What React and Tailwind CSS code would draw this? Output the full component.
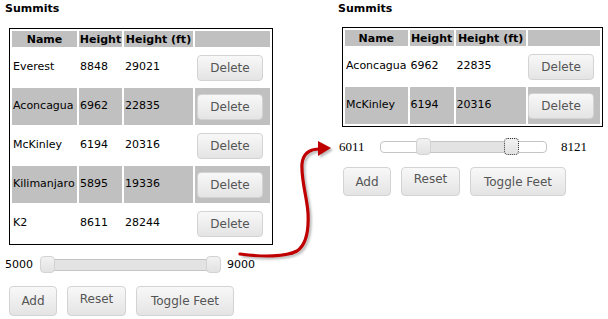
import * as React from "react"

const leftRows = [
    { name: "Everest", m: 8848, ft: 29021 },
    { name: "Aconcagua", m: 6962, ft: 22835 },
    { name: "McKinley", m: 6194, ft: 20316 },
    { name: "Kilimanjaro", m: 5895, ft: 19336 },
    { name: "K2", m: 8611, ft: 28244 },
]

const rightRows = [
    { name: "Aconcagua", m: 6962, ft: 22835 },
    { name: "McKinley", m: 6194, ft: 20316 },
]

const uiButton =
    "border border-[#d3d3d3] rounded-[4px] bg-gradient-to-b from-[#f8f8f8] to-[#e4e4e4] text-[#555] text-[12px] leading-none flex items-center justify-center"

function SummitsTable({ rows, cols }) {
    return (
        <table className="border border-black border-separate border-spacing-[2px] text-[11px] text-black">
            <thead>
                <tr className="h-[16px]">
                    <th className="bg-[#c0c0c0] font-bold p-0 leading-[13px]" style={{ width: cols[0] }}>Name</th>
                    <th className="bg-[#c0c0c0] font-bold p-0 leading-[13px]" style={{ width: cols[1] }}>Height</th>
                    <th className="bg-[#c0c0c0] font-bold p-0 leading-[13px]" style={{ width: cols[2] }}>Height (ft)</th>
                    <th className="bg-[#c0c0c0] p-0" style={{ width: cols[3] }}></th>
                </tr>
            </thead>
            <tbody>
                {rows.map((r, i) => (
                    <tr key={r.name} className={i % 2 ? "h-[37px] bg-[#c0c0c0]" : "h-[37px] bg-white"}>
                        <td className="px-[1px] text-left">{r.name}</td>
                        <td className="px-[1px] text-left">{r.m}</td>
                        <td className="px-[1px] text-left">{r.ft}</td>
                        <td className="p-0">
                            <div className="flex justify-center pr-[5px]">
                                <button className={uiButton + " w-[66px] h-[26px] text-[12.5px]"}>Delete</button>
                            </div>
                        </td>
                    </tr>
                ))}
            </tbody>
        </table>
    )
}

function RangeSlider({ width, from, to, focus }) {
    // from / to are handle left offsets inside the track
    return (
        <div className="relative h-[12px] border border-[#c5c5c5] rounded-[4px] bg-white" style={{ width }}>
            <div className="absolute top-0 bottom-0 bg-[#e3e3e3]" style={{ left: from + 7, width: to - from }} />
            <div
                className="absolute top-[-4px] w-[15px] h-[17px] rounded-[4px] border border-[#d3d3d3] bg-gradient-to-b from-[#f2f2f2] to-[#e2e2e2]"
                style={{ left: from - 1 }}
            />
            <div
                className={
                    focus
                        ? "absolute top-[-4px] w-[15px] h-[17px] rounded-[4px] border border-dotted border-[#333] bg-gradient-to-b from-[#f2f2f2] to-[#e2e2e2]"
                        : "absolute top-[-4px] w-[15px] h-[17px] rounded-[4px] border border-[#d3d3d3] bg-gradient-to-b from-[#f2f2f2] to-[#e2e2e2]"
                }
                style={{ left: to - 1 }}
            />
        </div>
    )
}

function Buttons({ h, widths, gap }) {
    return (
        <div className="flex" style={{ gap }}>
            <button className={uiButton} style={{ width: widths[0], height: h }}>Add</button>
            <button className={uiButton + " pb-[5px]"} style={{ width: widths[1], height: h }}>Reset</button>
            <button className={uiButton} style={{ width: widths[2], height: h }}>Toggle Feet</button>
        </div>
    )
}

export default function App() {
    return (
        <div className="relative w-[608px] h-[319px] bg-white overflow-hidden flex font-['DejaVu_Sans',Verdana,sans-serif]">

            {/* Left - full list */}
            <div className="flex flex-col pl-[5px] pt-[2px] w-[338px] shrink-0">
                <div className="text-[11px] font-bold leading-[13px] text-black">Summits</div>

                <div className="ml-[4px] mt-[13px]">
                    <SummitsTable rows={leftRows} cols={[65, 43, 69, 75]} />
                </div>

                <div className="flex items-center mt-[12px] h-[16px] text-[11px] text-black">
                    <span className="w-[28px]">5000</span>
                    <div className="ml-[7px]">
                        <RangeSlider width={180} from={0} to={166} />
                    </div>
                    <span className="ml-[7px]">9000</span>
                </div>

                <div className="ml-[4px] mt-[13px]">
                    <Buttons h={30} widths={[48, 59, 98]} gap={10} />
                </div>
            </div>

            {/* Right - filtered */}
            <div className="flex flex-col pt-[2px]">
                <div className="text-[11px] font-bold leading-[13px] text-black">Summits</div>

                <div className="ml-[4px] mt-[12px]">
                    <SummitsTable rows={rightRows} cols={[61, 44, 70, 72]} />
                </div>

                <div className="flex items-center mt-[12px] h-[16px] text-[13px] text-black font-['Liberation_Serif',serif]">
                    <span className="ml-[1px] w-[26px]">6011</span>
                    <div className="ml-[15px]">
                        <RangeSlider width={167} from={36} to={124} focus />
                    </div>
                    <span className="ml-[14px]">8121</span>
                </div>

                <div className="ml-[5px] mt-[12px]">
                    <Buttons h={29} widths={[48, 59, 96]} gap={10} />
                </div>
            </div>

            {/* Arrow overlay */}
            <svg className="absolute inset-0 pointer-events-none" width="608" height="319" viewBox="0 0 608 319">
                <defs>
                    <filter id="sh" x="-20%" y="-20%" width="140%" height="140%">
                        <feGaussianBlur stdDeviation="1.2" />
                    </filter>
                </defs>
                <g transform="translate(2 2)" opacity="0.45" filter="url(#sh)">
                    <path d="M240 254 C262 257 286 257 297 251 C306 245 309 232 308 213 C307 197 301 180 302 164 C303 153 310 149 320 149" fill="none" stroke="#666" strokeWidth="3" />
                    <polygon points="318,141 331,148 318,156" fill="#666" />
                </g>
                <path d="M240 254 C262 257 286 257 297 251 C306 245 309 232 308 213 C307 197 301 180 302 164 C303 153 310 149 320 149" fill="none" stroke="#c00000" strokeWidth="3.2" strokeLinecap="round" />
                <polygon points="318,141 331,148 318,156" fill="#c00000" />
            </svg>
        </div>
    )
}
